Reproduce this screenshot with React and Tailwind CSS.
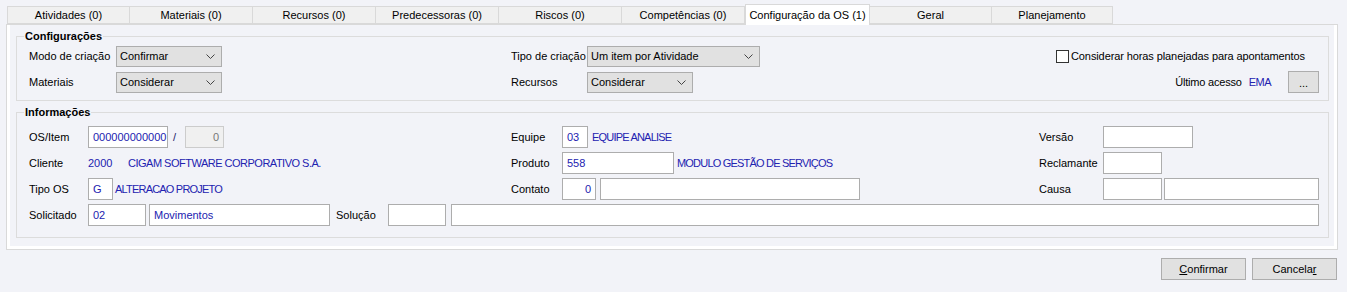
import React from 'react';

const tabs = [
  { label: 'Atividades (0)', w: 'w-[123px]' },
  { label: 'Materiais (0)', w: 'w-[123px]' },
  { label: 'Recursos (0)', w: 'w-[123px]' },
  { label: 'Predecessoras (0)', w: 'w-[123px]' },
  { label: 'Riscos (0)', w: 'w-[123px]' },
  { label: 'Competências (0)', w: 'w-[123px]' },
  { label: 'Configuração da OS (1)', w: 'w-[125px]', active: true },
  { label: 'Geral', w: 'w-[122px]' },
  { label: 'Planejamento', w: 'w-[121px]' },
];

function Chevron() {
  return (
    <svg width="9" height="5" viewBox="0 0 9 5" className="shrink-0">
      <polyline points="0.5,0.5 4.5,4.5 8.5,0.5" fill="none" stroke="#444" strokeWidth="1" />
    </svg>
  );
}

function Select({ value, className }) {
  return (
    <div
      className={
        'h-[21px] flex items-center justify-between pl-[3px] pr-[6px] bg-[#e1e1e1] border border-[#adadad] ' +
        className
      }
    >
      <span>{value}</span>
      <Chevron />
    </div>
  );
}

function Field({ value, className, right }) {
  return (
    <div
      className={
        'h-[22px] flex items-center bg-white border border-[#adadad] text-[#2222b0] ' +
        (right ? 'justify-end pr-[4px] ' : 'pl-[4px] ') +
        className
      }
    >
      {value}
    </div>
  );
}

function GroupTitle({ children }) {
  return (
    <div className="-mt-[8px] -ml-[5px] w-fit h-[15px] leading-[15px] px-[1px] bg-[#f2f3f8] font-bold">
      {children}
    </div>
  );
}

export default function App() {
  return (
    <div
      className="w-[1347px] h-[292px] bg-[#f2f3f8] text-[11px] text-black pt-[4px]"
      style={{ fontFamily: '"Liberation Sans", Arial, sans-serif' }}
    >
      {/* tabs */}
      <div className="flex items-end h-[21px] pl-[7px] -mb-[1px] relative z-10">
        {tabs.map((t) =>
          t.active ? (
            <div
              key={t.label}
              className={t.w + ' h-[21px] flex items-center justify-center bg-white border border-b-0 border-[#d9d9d9]'}
            >
              {t.label}
            </div>
          ) : (
            <div
              key={t.label}
              className={t.w + ' h-[18px] mb-[1px] flex items-center justify-center bg-[#f0f0f0] border border-l-0 first:border-l border-[#d9d9d9]'}
            >
              {t.label}
            </div>
          )
        )}
      </div>

      {/* tab page */}
      <div className="ml-[6px] w-[1332px] border border-[#d9d9d9] bg-white px-[3px] pb-[3px]">
        <div className="bg-[#f2f3f8] pl-[6px] pr-[5px] pt-[11px] pb-[8px]">
          {/* Configurações */}
          <div className="border border-[#dcdcdc] pl-[12px] pr-[9px] pb-[7px]">
            <GroupTitle>Configurações</GroupTitle>
            <div className="mt-[2px] flex h-[21px] items-center">
              <div className="w-[482px] flex items-center">
                <span className="w-[87px]">Modo de criação</span>
                <Select value="Confirmar" className="w-[106px]" />
              </div>
              <div className="flex items-center">
                <span className="w-[76px]">Tipo de criação</span>
                <Select value="Um item por Atividade" className="w-[173px]" />
              </div>
              <div className="ml-auto mr-[14px] flex items-center gap-[2px]">
                <span className="w-[13px] h-[13px] bg-white border border-[#333]" />
                <span className="tracking-[-0.1px]">Considerar horas planejadas para apontamentos</span>
              </div>
            </div>
            <div className="mt-[4px] flex h-[22px] items-center">
              <div className="w-[482px] flex items-center">
                <span className="w-[87px]">Materiais</span>
                <Select value="Considerar" className="w-[106px]" />
              </div>
              <div className="flex items-center">
                <span className="w-[76px]">Recursos</span>
                <Select value="Considerar" className="w-[106px]" />
              </div>
              <div className="ml-auto flex items-center">
                <span className="tracking-[-0.2px]">Último acesso</span>
                <span className="ml-[7px] text-[#2222b0] tracking-[-0.5px]">EMA</span>
                <div className="ml-[17px] w-[31px] h-[22px] bg-[#e1e1e1] border border-[#adadad] flex items-end justify-center pb-[3px] leading-none">
                  ...
                </div>
              </div>
            </div>
          </div>

          {/* Informações */}
          <div className="mt-[11px] border border-[#dcdcdc] pl-[12px] pr-[9px] pb-[11px]">
            <GroupTitle>Informações</GroupTitle>
            <div className="mt-[6px] flex flex-col gap-[4px]">
              <div className="flex h-[22px] items-center">
                <div className="w-[482px] flex items-center">
                  <span className="w-[59px]">OS/Item</span>
                  <Field value="000000000000" className="w-[80px]" />
                  <span className="w-[17px] pl-[5px] text-[#1b1b6a]">/</span>
                  <div className="w-[39px] h-[22px] flex items-center justify-end pr-[4px] bg-[#f0f0f0] border border-[#cccccc] text-[#777]">
                    0
                  </div>
                </div>
                <div className="w-[528px] flex items-center">
                  <span className="w-[51px]">Equipe</span>
                  <Field value="03" className="w-[26px]" />
                  <span className="ml-[4px] text-[#2222b0] tracking-[-0.8px]">EQUIPE ANALISE</span>
                </div>
                <div className="flex items-center">
                  <span className="w-[64px]">Versão</span>
                  <Field value="" className="w-[90px]" />
                </div>
              </div>

              <div className="flex h-[22px] items-center">
                <div className="w-[482px] flex items-center">
                  <span className="w-[59px]">Cliente</span>
                  <span className="w-[40px] text-[#2222b0]">2000</span>
                  <span className="text-[#2222b0] tracking-[-0.5px]">CIGAM SOFTWARE CORPORATIVO S.A.</span>
                </div>
                <div className="w-[528px] flex items-center">
                  <span className="w-[51px]">Produto</span>
                  <Field value="558" className="w-[112px]" />
                  <span className="ml-[3px] text-[#2222b0] tracking-[-0.8px]">MODULO GESTÃO DE SERVIÇOS</span>
                </div>
                <div className="flex items-center">
                  <span className="w-[64px]">Reclamante</span>
                  <Field value="" className="w-[59px]" />
                </div>
              </div>

              <div className="flex h-[22px] items-center">
                <div className="w-[482px] flex items-center">
                  <span className="w-[59px]">Tipo OS</span>
                  <Field value="G" className="w-[25px]" />
                  <span className="ml-[2px] text-[#2222b0] tracking-[-0.8px]">ALTERACAO PROJETO</span>
                </div>
                <div className="w-[528px] flex items-center">
                  <span className="w-[51px]">Contato</span>
                  <Field value="0" right className="w-[34px]" />
                  <Field value="" className="ml-[4px] w-[260px]" />
                </div>
                <div className="flex-1 flex items-center">
                  <span className="w-[64px]">Causa</span>
                  <Field value="" className="w-[59px]" />
                  <Field value="" className="ml-[2px] flex-1" />
                </div>
              </div>

              <div className="flex h-[22px] items-center">
                <span className="w-[59px]">Solicitado</span>
                <Field value="02" className="w-[58px]" />
                <Field value="Movimentos" className="ml-[3px] w-[181px]" />
                <span className="ml-[6px] w-[52px]">Solução</span>
                <Field value="" className="w-[58px]" />
                <Field value="" className="ml-[5px] flex-1" />
              </div>
            </div>
          </div>
        </div>
      </div>

      {/* bottom buttons */}
      <div className="mt-[8px] flex justify-end gap-[6px] pr-[10px]">
        <button className="w-[85px] h-[22px] bg-[#e1e1e1] border border-[#adadad]">
          <span className="underline">C</span>onfirmar
        </button>
        <button className="w-[85px] h-[22px] bg-[#e1e1e1] border border-[#adadad]">
          Cancela<span className="underline">r</span>
        </button>
      </div>
    </div>
  );
}
